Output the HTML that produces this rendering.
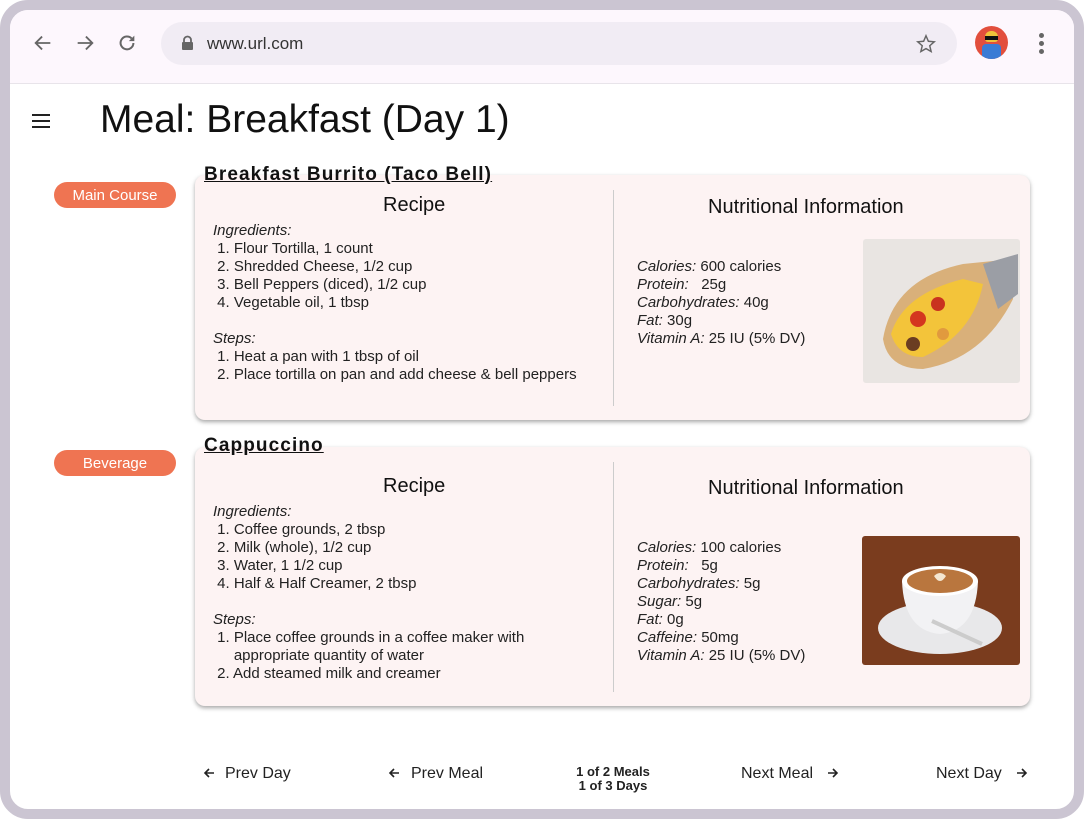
<!DOCTYPE html>
<html><head><style>
*{box-sizing:border-box;margin:0;padding:0}
body{width:1084px;height:819px;background:#fff;font-family:"Liberation Sans",sans-serif;overflow:hidden;position:relative}
.frame{position:absolute;left:0;top:0;width:1084px;height:819px;border:10px solid #cbc5d2;border-radius:28px;background:#fff;overflow:hidden}
.bar{position:absolute;left:0;top:0;right:0;height:74px;background:#fdf7fd;border-bottom:1px solid #e8e4ea}
.url{position:absolute;left:151px;top:12px;width:796px;height:43px;border-radius:22px;background:#f1ecf4}
.url span{position:absolute;left:46px;top:12px;font-size:17px;color:#333}
.abs{position:absolute}
h1{position:absolute;left:90px;top:88px;font-size:39px;font-weight:normal;color:#111}
.pill{position:absolute;width:122px;height:26px;border-radius:13px;background:#ef7452;color:#fff;font-size:15px;text-align:center;line-height:27px}
.title{position:absolute;left:194px;font-size:19px;font-weight:bold;text-decoration:underline;color:#111;z-index:3;letter-spacing:1.1px}
.card{position:absolute;left:185px;width:835px;background:#fdf3f3;border-radius:10px;box-shadow:0 2px 4px rgba(0,0,0,.35)}
.div{position:absolute;left:418px;top:15px;bottom:14px;width:1px;background:#ccc}
.h{position:absolute;font-size:20px;color:#111}
.txt{position:absolute;font-size:15px;line-height:18px;color:#222}
.txt i{font-style:italic}
.img{position:absolute;border-radius:3px}
.nav{position:absolute;top:764px;font-size:16px;color:#222}
</style></head><body>
<div class="frame">
<div class="bar">
<svg class="abs" style="left:22px;top:22px" width="22" height="22" viewBox="0 0 24 24"><path d="M20 12H5M11 5l-7 7 7 7" stroke="#666" stroke-width="2" fill="none"/></svg>
<svg class="abs" style="left:64px;top:22px" width="22" height="22" viewBox="0 0 24 24"><path d="M4 12h15M13 5l7 7-7 7" stroke="#666" stroke-width="2" fill="none"/></svg>
<svg class="abs" style="left:106px;top:22px" width="22" height="22" viewBox="0 0 24 24"><path d="M19 12a7 7 0 1 1-2-5" stroke="#666" stroke-width="2.2" fill="none"/><path d="M20 4v6h-6z" fill="#666"/></svg>
<div class="url"><svg class="abs" style="left:20px;top:13px" width="13" height="16" viewBox="0 0 13 16"><path d="M3 7V5a3.5 3.5 0 0 1 7 0v2" stroke="#666" stroke-width="1.8" fill="none"/><rect x="1" y="7" width="11" height="8" rx="1" fill="#666"/></svg><span>www.url.com</span>
<svg class="abs" style="left:754px;top:11px" width="22" height="22" viewBox="0 0 24 24"><path d="M12 3l2.6 6 6.4.6-4.9 4.3 1.5 6.3L12 17l-5.6 3.2 1.5-6.3L3 9.6 9.4 9z" stroke="#666" stroke-width="1.6" fill="none"/></svg></div>
<div class="abs" style="left:965px;top:16px;width:33px;height:33px;border-radius:50%;background:#e24f3d;overflow:hidden"><div class="abs" style="left:10px;top:5px;width:13px;height:11px;border-radius:6px 6px 3px 3px;background:#f0c23a"></div><div class="abs" style="left:10px;top:10px;width:13px;height:4px;background:#111"></div><div class="abs" style="left:7px;top:18px;width:19px;height:16px;background:#3a7bd5;border-radius:4px 4px 0 0"></div></div>
<div class="abs" style="left:1029px;top:23px;width:5px;height:5px;border-radius:50%;background:#666;box-shadow:0 8px 0 #666,0 16px 0 #666"></div>
</div>
<svg class="abs" style="left:22px;top:104px" width="18" height="14"><path d="M0 1h18M0 7h18M0 13h18" stroke="#222" stroke-width="2"/></svg>
<h1>Meal: Breakfast (Day 1)</h1>

<div class="pill" style="left:44px;top:172px">Main Course</div>
<div class="title" style="top:154px">Breakfast Burrito (Taco Bell)</div>
<div class="card" style="top:165px;height:245px">
<div class="div"></div>
<div class="h" style="left:188px;top:19px">Recipe</div>
<div class="h" style="left:513px;top:21px">Nutritional Information</div>
<div class="txt" style="left:18px;top:47px"><i>Ingredients:</i><br>&nbsp;1. Flour Tortilla, 1 count<br>&nbsp;2. Shredded Cheese, 1/2 cup<br>&nbsp;3. Bell Peppers (diced), 1/2 cup<br>&nbsp;4. Vegetable oil, 1 tbsp<br><br><i>Steps:</i><br>&nbsp;1. Heat a pan with 1 tbsp of oil<br>&nbsp;2. Place tortilla on pan and add cheese &amp; bell peppers</div>
<div class="txt" style="left:442px;top:83px"><i>Calories:</i> 600 calories<br><i>Protein:</i>&nbsp;&nbsp; 25g<br><i>Carbohydrates:</i> 40g<br><i>Fat:</i> 30g<br><i>Vitamin A:</i> 25 IU (5% DV)</div>
<div class="img" style="left:668px;top:64px;width:157px;height:144px;background:#e9e5e2">
<svg width="157" height="144"><path d="M20 100 Q30 40 100 25 L150 20 L150 60 Q120 120 60 130 Q25 130 20 100z" fill="#d9b07a"/><path d="M28 95 Q40 55 100 40 L120 45 Q110 95 60 118 Q35 118 28 95z" fill="#f3c43a"/><circle cx="55" cy="80" r="8" fill="#d4361f"/><circle cx="75" cy="65" r="7" fill="#c9331f"/><circle cx="50" cy="105" r="7" fill="#6b3d22"/><circle cx="80" cy="95" r="6" fill="#e19a3e"/><path d="M120 25 L155 15 L155 55 L135 70z" fill="#9b9ea5"/></svg></div>
</div>

<div class="pill" style="left:44px;top:440px">Beverage</div>
<div class="title" style="top:425px">Cappuccino</div>
<div class="card" style="top:437px;height:259px">
<div class="div"></div>
<div class="h" style="left:188px;top:28px">Recipe</div>
<div class="h" style="left:513px;top:30px">Nutritional Information</div>
<div class="txt" style="left:18px;top:56px"><i>Ingredients:</i><br>&nbsp;1. Coffee grounds, 2 tbsp<br>&nbsp;2. Milk (whole), 1/2 cup<br>&nbsp;3. Water, 1 1/2 cup<br>&nbsp;4. Half &amp; Half Creamer, 2 tbsp<br><br><i>Steps:</i><br>&nbsp;1. Place coffee grounds in a coffee maker with<br>&nbsp;&nbsp;&nbsp;&nbsp;&nbsp;appropriate quantity of water<br>&nbsp;2. Add steamed milk and creamer</div>
<div class="txt" style="left:442px;top:92px"><i>Calories:</i> 100 calories<br><i>Protein:</i>&nbsp;&nbsp; 5g<br><i>Carbohydrates:</i> 5g<br><i>Sugar:</i> 5g<br><i>Fat:</i> 0g<br><i>Caffeine:</i> 50mg<br><i>Vitamin A:</i> 25 IU (5% DV)</div>
<div class="img" style="left:667px;top:89px;width:158px;height:129px;background:#7a3c1e;overflow:hidden">
<svg width="158" height="129"><ellipse cx="78" cy="92" rx="62" ry="26" fill="#e8e8ea"/><path d="M40 45 Q42 95 78 98 Q114 95 116 45z" fill="#f2f2f4"/><ellipse cx="78" cy="45" rx="38" ry="15" fill="#fff"/><ellipse cx="78" cy="45" rx="33" ry="12" fill="#b9763e"/><path d="M72 40 Q78 34 84 40 Q78 50 72 40z" fill="#f4e6d0"/><path d="M70 85 L120 108" stroke="#ccc" stroke-width="4"/></svg></div>
</div>

<svg class="abs" style="left:193px;top:757px" width="12" height="12" viewBox="0 0 12 12"><path d="M11 6H2M6 2L2 6l4 4" stroke="#222" stroke-width="1.6" fill="none"/></svg>
<div class="nav" style="left:215px;top:755px">Prev Day</div>
<svg class="abs" style="left:378px;top:757px" width="12" height="12" viewBox="0 0 12 12"><path d="M11 6H2M6 2L2 6l4 4" stroke="#222" stroke-width="1.6" fill="none"/></svg>
<div class="nav" style="left:401px;top:755px">Prev Meal</div>
<div class="abs" style="left:553px;top:755px;width:100px;text-align:center;font-size:13px;font-weight:bold;line-height:14px;color:#222">1 of 2 Meals<br>1 of 3 Days</div>
<div class="nav" style="left:731px;top:755px">Next Meal</div>
<svg class="abs" style="left:817px;top:757px" width="12" height="12" viewBox="0 0 12 12"><path d="M1 6h9M6 2l4 4-4 4" stroke="#222" stroke-width="1.6" fill="none"/></svg>
<div class="nav" style="left:926px;top:755px">Next Day</div>
<svg class="abs" style="left:1006px;top:757px" width="12" height="12" viewBox="0 0 12 12"><path d="M1 6h9M6 2l4 4-4 4" stroke="#222" stroke-width="1.6" fill="none"/></svg>
</div>
</body></html>
